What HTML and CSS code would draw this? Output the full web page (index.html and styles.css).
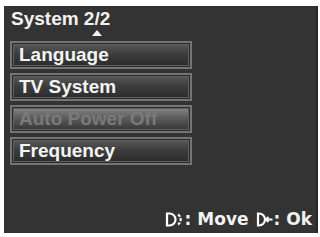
FILE: index.html
```html
<!DOCTYPE html>
<html>
<head>
<meta charset="utf-8">
<link rel="stylesheet" href="styles.css">
</head>
<body>
<div class="panel">
  <div class="title">System 2/2</div>
  <div class="caret"></div>
  <ul class="menu">
    <li class="item">Language</li>
    <li class="item">TV System</li>
    <li class="item disabled">Auto Power Off</li>
    <li class="item">Frequency</li>
  </ul>
  <div class="hints">
    <span class="hint">
      <svg class="icon" width="19" height="15" viewBox="0 0 19 15">
        <path d="M2 1.5 V13.5 H4.5 A6 6 0 0 0 4.5 1.5 Z" fill="none" stroke="#fff" stroke-width="2.2"/>
        <path d="M13 2.5 A6 6 0 0 1 13 12.5" fill="none" stroke="#fff" stroke-width="2.2" stroke-dasharray="3 1.5"/>
      </svg>
      <span>: Move</span>
    </span>
    <span class="hint">
      <svg class="icon" width="17" height="15" viewBox="0 0 17 15">
        <path d="M2 1.5 V13.5 H3 A6 6 0 0 0 3 1.5 Z" fill="none" stroke="#fff" stroke-width="2.2"/>
        <path d="M10 7.5 H16.5 M10 7.5 L12.5 5 M10 7.5 L12.5 10" fill="none" stroke="#fff" stroke-width="1.8"/>
      </svg>
      <span>: Ok</span>
    </span>
  </div>
</div>
</body>
</html>
```
FILE: styles.css
```css
html, body {
  margin: 0;
  padding: 0;
  background: #fff;
}
.panel {
  margin: 6px 2px 4px 4px;
  width: 312px;
  height: 227px;
  background: #333;
  border-right: 2px solid #262626;
  box-sizing: content-box;
  display: flex;
  flex-direction: column;
  font-family: "Liberation Sans", Arial, sans-serif;
  font-weight: bold;
  color: #f2f2f2;
}
.title {
  margin: 3px 0 0 7px;
  font-size: 19px;
  line-height: 20px;
}
.caret {
  margin: 1px 0 0 88px;
  width: 0;
  height: 0;
  border-left: 5px solid transparent;
  border-right: 5px solid transparent;
  border-bottom: 6px solid #f2f2f2;
}
.menu {
  list-style: none;
  margin: 5px 0 0 6px;
  padding: 0;
  width: 182px;
  display: flex;
  flex-direction: column;
  gap: 4px;
}
.item {
  height: 28px;
  box-sizing: border-box;
  border: 2px solid #747474;
  box-shadow: inset 0 0 0 1px #2c2c2c, inset 0 0 0 2px #5e5e5e;
  background: linear-gradient(#5c5c5c, #3d3d3d 45%, #2a2a2a);
  font-size: 19px;
  line-height: 24px;
  padding-left: 7px;
  color: #f4f4f4;
  white-space: nowrap;
}
.item.disabled {
  background: linear-gradient(#8a8a8a, #5c5c5c 45%, #333);
  color: #7a7a7a;
}
.hints {
  margin-top: auto;
  margin-bottom: 5px;
  display: flex;
  justify-content: flex-end;
  gap: 7px;
  padding-right: 4px;
  font-family: "DejaVu Sans", sans-serif;
  font-size: 17px;
  line-height: 18px;
}
.hint {
  display: flex;
  align-items: center;
  gap: 1px;
}
.icon {
  display: block;
}
```
